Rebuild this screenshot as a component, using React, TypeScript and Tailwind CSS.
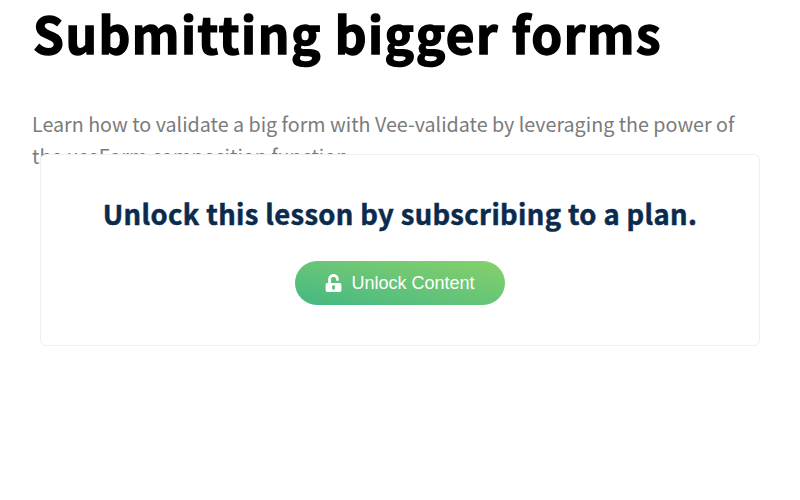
import { FaUnlockAlt } from "react-icons/fa";

export default function App() {
  return (
    <main className="h-[500px] w-[800px] overflow-hidden bg-white font-['Noto_Sans_CJK_SC',sans-serif]">
      <header className="h-[155px] px-8">
        <h1 className="pl-px text-[49.5px] leading-[65px] font-bold tracking-[1.5px] whitespace-nowrap text-black [-webkit-text-stroke:1.4px_black]">Submitting bigger forms</h1>
        <p className="mt-[43px] text-[19.7px] leading-[32px] text-[#7b7b7b]">
          <span className="block whitespace-nowrap">Learn how to validate a big form with Vee-validate by leveraging the power of</span>
          <span className="block whitespace-nowrap">the useForm composition function.</span>
        </p>
      </header>
      <section className="relative mx-10 -mt-px flex h-[192px] flex-col items-center rounded-md border border-[#efefef] bg-white">
        <h2 className="mt-[38px] text-[27.4px] leading-[40px] font-bold tracking-[0.36px] whitespace-nowrap text-[#0a2b4e] [-webkit-text-stroke:0.5px_#0a2b4e]">Unlock this lesson by subscribing to a plan.</h2>
        <button className="mt-[28px] flex h-[44px] w-[210px] items-center justify-center gap-[9px] rounded-full bg-linear-to-tr from-[#41b883] to-[#86d169] font-['Liberation_Sans',sans-serif] text-[18px] text-white">
          <FaUnlockAlt className="h-[18px] w-[17px]" />
          <span>Unlock Content</span>
        </button>
      </section>
    </main>
  );
}
